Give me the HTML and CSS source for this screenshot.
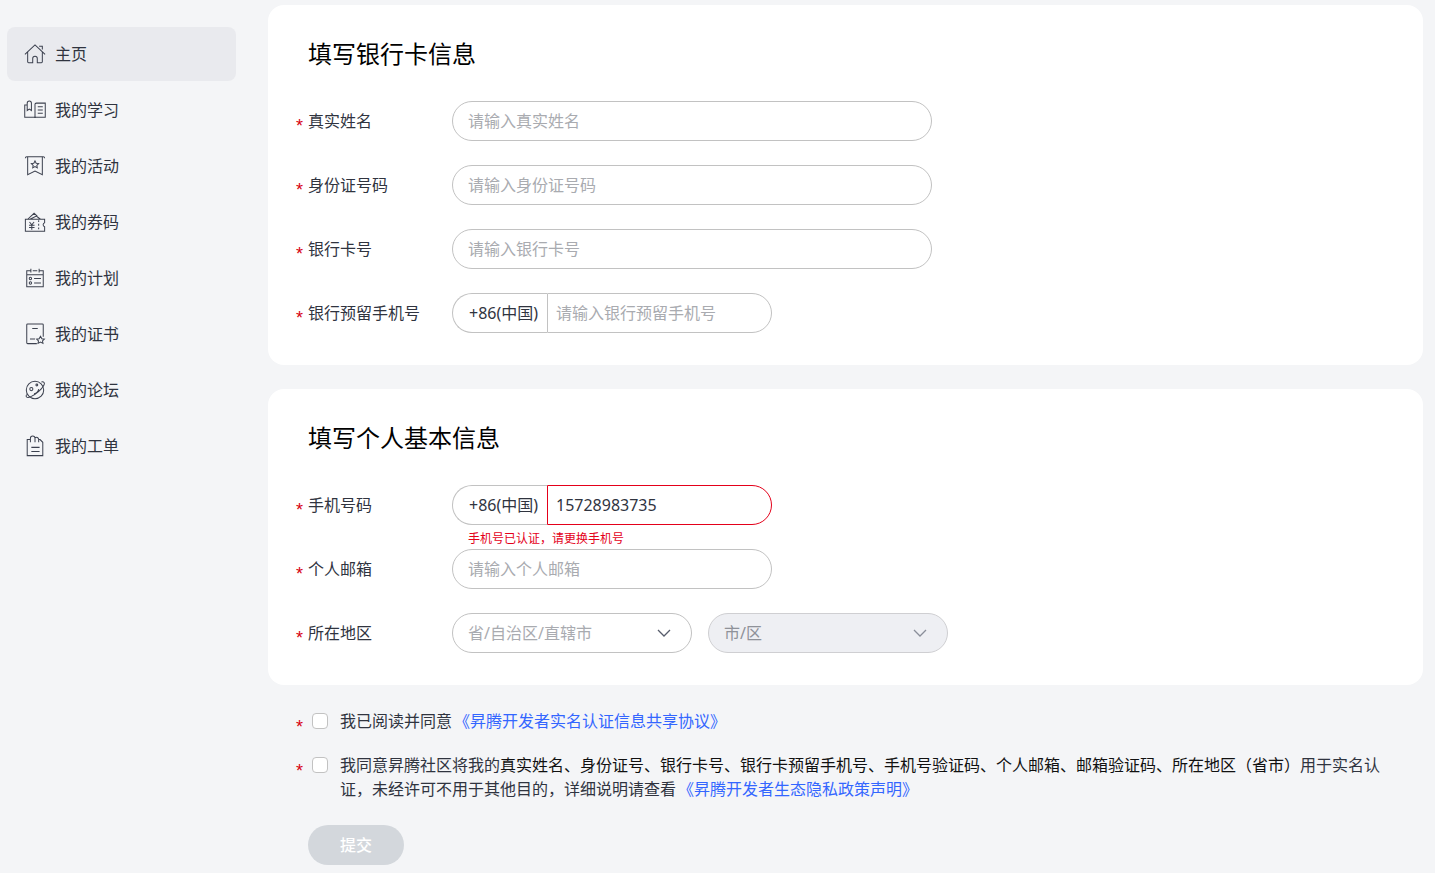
FILE: index.html
```html
<!DOCTYPE html>
<html lang="zh-CN">
<head>
<meta charset="utf-8">
<title>实名认证</title>
<link rel="stylesheet" href="styles.css">
</head>
<body>
<div class="page">
  <nav class="sidebar">
    <a class="nav-item active">
      <svg class="nav-icon" viewBox="0 0 24 24"><path d="M1 12.500 12 2l11 10.500M4 10v10.500q0 1 1 1h4.500v-4.500a2.500 2.500 0 0 1 5 0v4.500H19q1 0 1-1V10M16.500 3.500h3.500v3.500"/></svg>
      <span>主页</span>
    </a>
    <a class="nav-item">
      <svg class="nav-icon" viewBox="0 0 24 24"><path d="M3.500 6.500H.8V20H11c.5 0 1 .3 1 .8 0-.5.5-.8 1-.8h10.200V4.500H13.500c-.8 0-1.500.5-1.500 1.200v15M3.500 6V4.500a2.300 2.300 0 0 1 4.600 0v8l-2.300-1.500-2.300 1.500zM15 8.500h5.500M15 12h5.500M15 15.500h5.500"/></svg>
      <span>我的学习</span>
    </a>
    <a class="nav-item">
      <svg class="nav-icon" viewBox="0 0 24 24"><path d="M1.500 3.500q0-1.500 1.500-1.500h18q1.500 0 1.500 1.500M4 2v19.500l8-4 8 4V2M12 6.500l1.300 2.500 2.700.4-2 1.900.5 2.700-2.500-1.300-2.500 1.300.5-2.700-2-1.900 2.700-.4z"/></svg>
      <span>我的活动</span>
    </a>
    <a class="nav-item">
      <svg class="nav-icon" viewBox="0 0 24 24"><path d="M4 9 11 2.500l3.500 3M6.500 9l7-3.500L18 9M1.500 9H22.500v3.800a2.300 2.300 0 0 0 0 4.400V22H1.500zM6 12l2.500 3 2.500-3M5.500 15.500h6M5.500 18h6M8.500 15v5.500M16 10v2M16 14v2M16 18v2"/></svg>
      <span>我的券码</span>
    </a>
    <a class="nav-item">
      <svg class="nav-icon" viewBox="0 0 24 24"><path d="M7 4H3v17.500h18V4h-4M3 8.500h18M9.500 4h5M7.500 2v4M16.500 2v4M11 12.500h7.500M11 17.500h7.500"/><circle cx="7" cy="12.500" r="1.300"/><circle cx="7" cy="17.500" r="1.300"/></svg>
      <span>我的计划</span>
    </a>
    <a class="nav-item">
      <svg class="nav-icon" viewBox="0 0 24 24"><path d="M14 22.500H4a1 1 0 0 1-1-1V2a1 1 0 0 1 1-1h16a1 1 0 0 1 1 1v13M9 6h6M6.500 17.500H12M18 14.500l1.500 2.700 2.700.4-2 1.900.5 2.700-2.700-1.300-2.700 1.300.5-2.700-2-1.900 2.700-.4z"/></svg>
      <span>我的证书</span>
    </a>
    <a class="nav-item">
      <svg class="nav-icon" viewBox="0 0 24 24"><circle cx="12" cy="12" r="9.500"/><path d="M2.800 17c-1.500 2.500.5 4 4.200 2.500 6-2.300 12.500-8.500 14.800-13 1.200-2.300 0-3.800-2.800-3.300M16 11a6 6 0 0 1-5 5"/><circle cx="8" cy="11" r="1.700"/><circle cx="14" cy="6.500" r="1"/></svg>
      <span>我的论坛</span>
    </a>
    <a class="nav-item">
      <svg class="nav-icon" viewBox="0 0 24 24"><path d="M7 5H3.500v17.500h17V8l-3-3H16M7 8V3.500a2.500 2.500 0 0 1 5 0V8M12 3a2.500 2.500 0 0 1 4 2v3M8 13.500h9M8 18h9"/></svg>
      <span>我的工单</span>
    </a>
  </nav>

  <main class="content">
    <section class="card card-bank">
      <h2 class="card-title">填写银行卡信息</h2>
      <div class="row">
        <label class="label"><i class="star">*</i>真实姓名</label>
        <div class="field field-wide"><span class="placeholder">请输入真实姓名</span></div>
      </div>
      <div class="row">
        <label class="label"><i class="star">*</i>身份证号码</label>
        <div class="field field-wide"><span class="placeholder">请输入身份证号码</span></div>
      </div>
      <div class="row">
        <label class="label"><i class="star">*</i>银行卡号</label>
        <div class="field field-wide"><span class="placeholder">请输入银行卡号</span></div>
      </div>
      <div class="row">
        <label class="label"><i class="star">*</i>银行预留手机号</label>
        <div class="phone">
          <span class="prefix">+86(中国)</span>
          <span class="phone-input"><span class="placeholder">请输入银行预留手机号</span></span>
        </div>
      </div>
    </section>

    <section class="card card-person">
      <h2 class="card-title">填写个人基本信息</h2>
      <div class="row">
        <label class="label"><i class="star">*</i>手机号码</label>
        <div class="phone-wrap">
          <div class="phone">
            <span class="prefix">+86(中国)</span>
            <span class="phone-input is-error">15728983735</span>
          </div>
          <p class="error">手机号已认证，请更换手机号</p>
        </div>
      </div>
      <div class="row">
        <label class="label"><i class="star">*</i>个人邮箱</label>
        <div class="field field-mid"><span class="placeholder">请输入个人邮箱</span></div>
      </div>
      <div class="row">
        <label class="label"><i class="star">*</i>所在地区</label>
        <div class="selects">
          <div class="field field-select"><span class="placeholder">省/自治区/直辖市</span>
            <svg class="chevron" viewBox="0 0 14 8"><path d="M1 1l6 6 6-6"/></svg></div>
          <div class="field field-select is-disabled"><span class="placeholder">市/区</span>
            <svg class="chevron" viewBox="0 0 14 8"><path d="M1 1l6 6 6-6"/></svg></div>
        </div>
      </div>
    </section>

    <div class="agreements">
      <div class="agree">
        <i class="star agree-star">*</i><span class="checkbox"></span>
        <p class="agree-text">我已阅读并同意<a class="link">《昇腾开发者实名认证信息共享协议》</a></p>
      </div>
      <div class="agree">
        <i class="star agree-star">*</i><span class="checkbox"></span>
        <p class="agree-text">我同意昇腾社区将我的<span class="strong">真实姓名、身份证号、银行卡号、银行卡预留手机号、手机号验证码、个人邮箱、邮箱验证码、所在地区（省市）</span>用于实名认证，未经许可不用于其他目的，详细说明请查看<a class="link">《昇腾开发者生态隐私政策声明》</a></p>
      </div>
      <button class="submit" type="button">提交</button>
    </div>
  </main>
</div>
</body>
</html>
```

FILE: styles.css
```css
* { box-sizing: border-box; }
html, body { margin: 0; height: 100%; overflow: hidden; }
body {
  background: #f4f5f7;
  color: #30343f;
  font-family: "Noto Sans", "Noto Sans CJK SC", sans-serif;
  font-size: 16px;
  line-height: 24px;
}
p, h2 { margin: 0; }
i { font-style: normal; }
.page { display: flex; align-items: flex-start; padding: 5px 12px 0 7px; }
.sidebar { width: 229px; flex: none; margin-top: 22px; display: flex; flex-direction: column; gap: 2px; margin-right: 32px; }
.nav-item { display: flex; align-items: center; height: 54px; padding-left: 17px; border-radius: 8px; gap: 9px; }
.nav-item.active { background: #e9eaee; }
.nav-icon { width: 22px; height: 22px; flex: none; fill: none; stroke: #3c414f; stroke-width: 1.1; }
.content { flex: 1; min-width: 0; display: flex; flex-direction: column; }
.card { background: #fff; border-radius: 16px; padding: 32px 28px 0; }
.card-bank { height: 360px; margin-bottom: 24px; }
.card-person { height: 296px; }
.card-title { font-size: 24px; font-weight: 400; line-height: 34px; padding-left: 12px; margin-bottom: 30px; color: #000; }
.row { display: flex; align-items: flex-start; height: 40px; margin-bottom: 24px; }
.label { width: 156px; flex: none; line-height: 40px; white-space: nowrap; }
.star { color: #d7000f; display: inline-block; width: 12px; font-family: "Liberation Sans", sans-serif; font-size: 18px; line-height: 20px; vertical-align: -5px; }
.field { height: 40px; border: 1px solid #c2c2c2; border-radius: 20px; background: #fff; padding: 0 15px; display: flex; align-items: center; justify-content: space-between; }
.field-wide { width: 480px; }
.field-mid { width: 320px; }
.field-select { width: 240px; padding-right: 20px; }
.is-disabled { background: #eeeff3; border-color: #cfcfd2; }
.selects { display: flex; gap: 16px; }
.chevron { width: 14px; height: 8px; fill: none; stroke: #575d6c; stroke-width: 1.3; }
.is-disabled .chevron { stroke: #8a8e99; }
.placeholder { color: #a9abb0; }
.is-disabled .placeholder { color: #8f9299; }
.phone-wrap { position: relative; }
.phone { display: flex; width: 320px; height: 40px; }
.prefix { width: 95px; flex: none; border: 1px solid #c2c2c2; border-right: 0; border-radius: 20px 0 0 20px; line-height: 38px; padding-left: 16px; white-space: nowrap; }
.phone-input { flex: 1; border: 1px solid #c2c2c2; border-radius: 0 20px 20px 0; line-height: 38px; padding-left: 8px; }
.phone-input.is-error { border-color: #e4001a; }
.error { position: absolute; left: 16px; top: 45px; font-size: 12px; line-height: 18px; color: #e4001a; white-space: nowrap; }
.agreements { padding: 24px 28px 0 28px; }
.agree { display: flex; align-items: flex-start; margin-bottom: 20px; }
.agree-star { flex: none; width: 16px; height: 16px; margin-top: 8px; }
.checkbox { flex: none; width: 16px; height: 16px; border: 1px solid #c2c2c2; border-radius: 4px; background: #fff; margin: 4px 12px 0 0; }
.agree-text { flex: 1; }
.strong { color: #111; }
.link { color: #3366ff; margin-left: 2px; }
.submit { display: block; margin: 24px 0 0 12px; width: 96px; height: 40px; border: 0; border-radius: 20px; background: #d3d7dc; color: #fff; font: inherit; font-weight: 500; }
```
